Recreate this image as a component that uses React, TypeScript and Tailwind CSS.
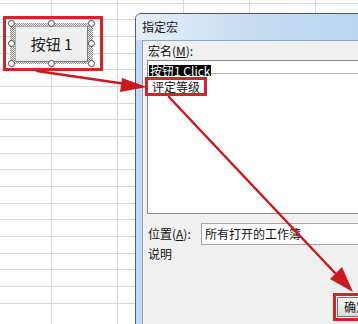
import React from 'react'

const cjk = { fontFamily: '"Noto Sans CJK SC", "Liberation Sans", sans-serif' }

// sheet columns: first one is cut off at the left
const columns = [52, 66, 66, 66, 66, 66]

const handles = [
  [0, 0], [40, 0], [80, 0],
  [0, 20], [80, 20],
  [0, 40], [40, 40], [80, 40],
]

function Sheet() {
  return (
    <div className="absolute inset-0 flex bg-white bg-[repeating-linear-gradient(to_bottom,transparent_0,transparent_15.67px,#d6d6d6_15.67px,#d6d6d6_16.67px)] bg-[position:0_-13px]">
      {columns.map((w, i) => (
        <div key={i} className="h-full shrink-0 border-r border-[#d6d6d6]" style={{ width: w }} />
      ))}
    </div>
  )
}

function FormButton() {
  return (
    <div className="absolute left-[3px] top-[16px] h-[55px] w-[100px] border-[3px] border-[#d42426] p-[4px]">
      <div className="relative h-[41px] w-[83px] bg-[repeating-conic-gradient(#8a8a8a_0_25%,#f4f4f4_0_50%)] bg-[length:2px_2px] px-[5px] pt-[3px] pb-[2px]">
        <div
          className="flex h-full w-full items-center justify-center border border-[#b0b0b0] border-r-[#7d7d7d] border-b-[#7d7d7d] bg-[#efefef] text-[15px] text-[#222]"
          style={cjk}
        >
          按钮 1
        </div>
        {handles.map(([x, y], i) => (
          <span
            key={i}
            className="absolute h-[7px] w-[7px] rounded-full border border-[#444] bg-white"
            style={{ left: x - 2, top: y - 3 }}
          />
        ))}
      </div>
    </div>
  )
}

function MacroDialog() {
  return (
    <div className="absolute left-[135px] top-[13px] h-[320px] w-[240px] overflow-hidden rounded-tl-[6px] border border-[#4f5d6c] bg-[#c3d9f0]" style={cjk}>
      <div className="flex h-[26px] items-center bg-[linear-gradient(90deg,#e4eef8,#c9def3_45%,#b7d5f2)] pl-[6px] text-[12px] text-[#1a1a1a]">
        指定宏
      </div>
      <div className="ml-[6px] h-full border-l border-t border-[#8ea4bc] bg-[#f0f0f0] pt-[2px] text-[12px] text-[#111]">
        <div className="pl-[5px] leading-[16px]">
          宏名(<span className="underline">M</span>):
        </div>
        <div className="ml-[4px] mt-[1px] border border-[#8c8c8c] bg-white">
          <div className="h-[12px] pl-px pt-px">
            <span className="inline-block bg-black px-px text-[12px] leading-[11px] text-white" style={{ fontFamily: '"Noto Sans CJK SC", "Liberation Mono", monospace' }}>
              按钮1 Click
            </span>
          </div>
          <div className="h-[140px] border-t border-[#b5b5b5] pl-[4px] pt-[3px]">
            <div className="ml-[-7px] inline-block border-[3px] border-[#d42426] px-[4px] text-[12px] leading-[13px]">
              评定等级
            </div>
          </div>
        </div>
        <div className="mt-[9px] flex items-center">
          <div className="w-[58px] pl-[5px]">
            位置(<span className="underline">A</span>):
          </div>
          <div className="flex h-[22px] flex-1 items-center border border-[#a6a6a6] bg-white pl-[3px] text-[12px]">
            所有打开的工作簿
          </div>
        </div>
        <div className="pl-[5px] pt-px leading-[16px]">说明</div>
        <div className="mt-[31px] pl-[190px]">
          <div className="w-[60px] border-[3px] border-[#d42426] p-px">
            <div className="flex h-[20px] items-center border border-[#707070] bg-[linear-gradient(#f6f6f6,#dcdcdc)] pl-[6px] text-[12px]">
              确定
            </div>
          </div>
        </div>
      </div>
    </div>
  )
}

function Arrows() {
  return (
    <svg className="pointer-events-none absolute inset-0" width="358" height="324" viewBox="0 0 358 324">
      <g stroke="#cc1820" strokeWidth="2.5" fill="#cc1820" strokeLinecap="round">
        <line x1="37" y1="71" x2="126" y2="84" />
        <polygon points="147,87 122,78 120,92" stroke="none" />
        <line x1="169" y1="97" x2="336" y2="274" />
        <polygon points="353,292 330,279 342,267" stroke="none" />
      </g>
    </svg>
  )
}

export default function App() {
  return (
    <div className="relative h-[324px] w-[358px] overflow-hidden bg-white">
      <Sheet />
      <FormButton />
      <MacroDialog />
      <Arrows />
    </div>
  )
}
